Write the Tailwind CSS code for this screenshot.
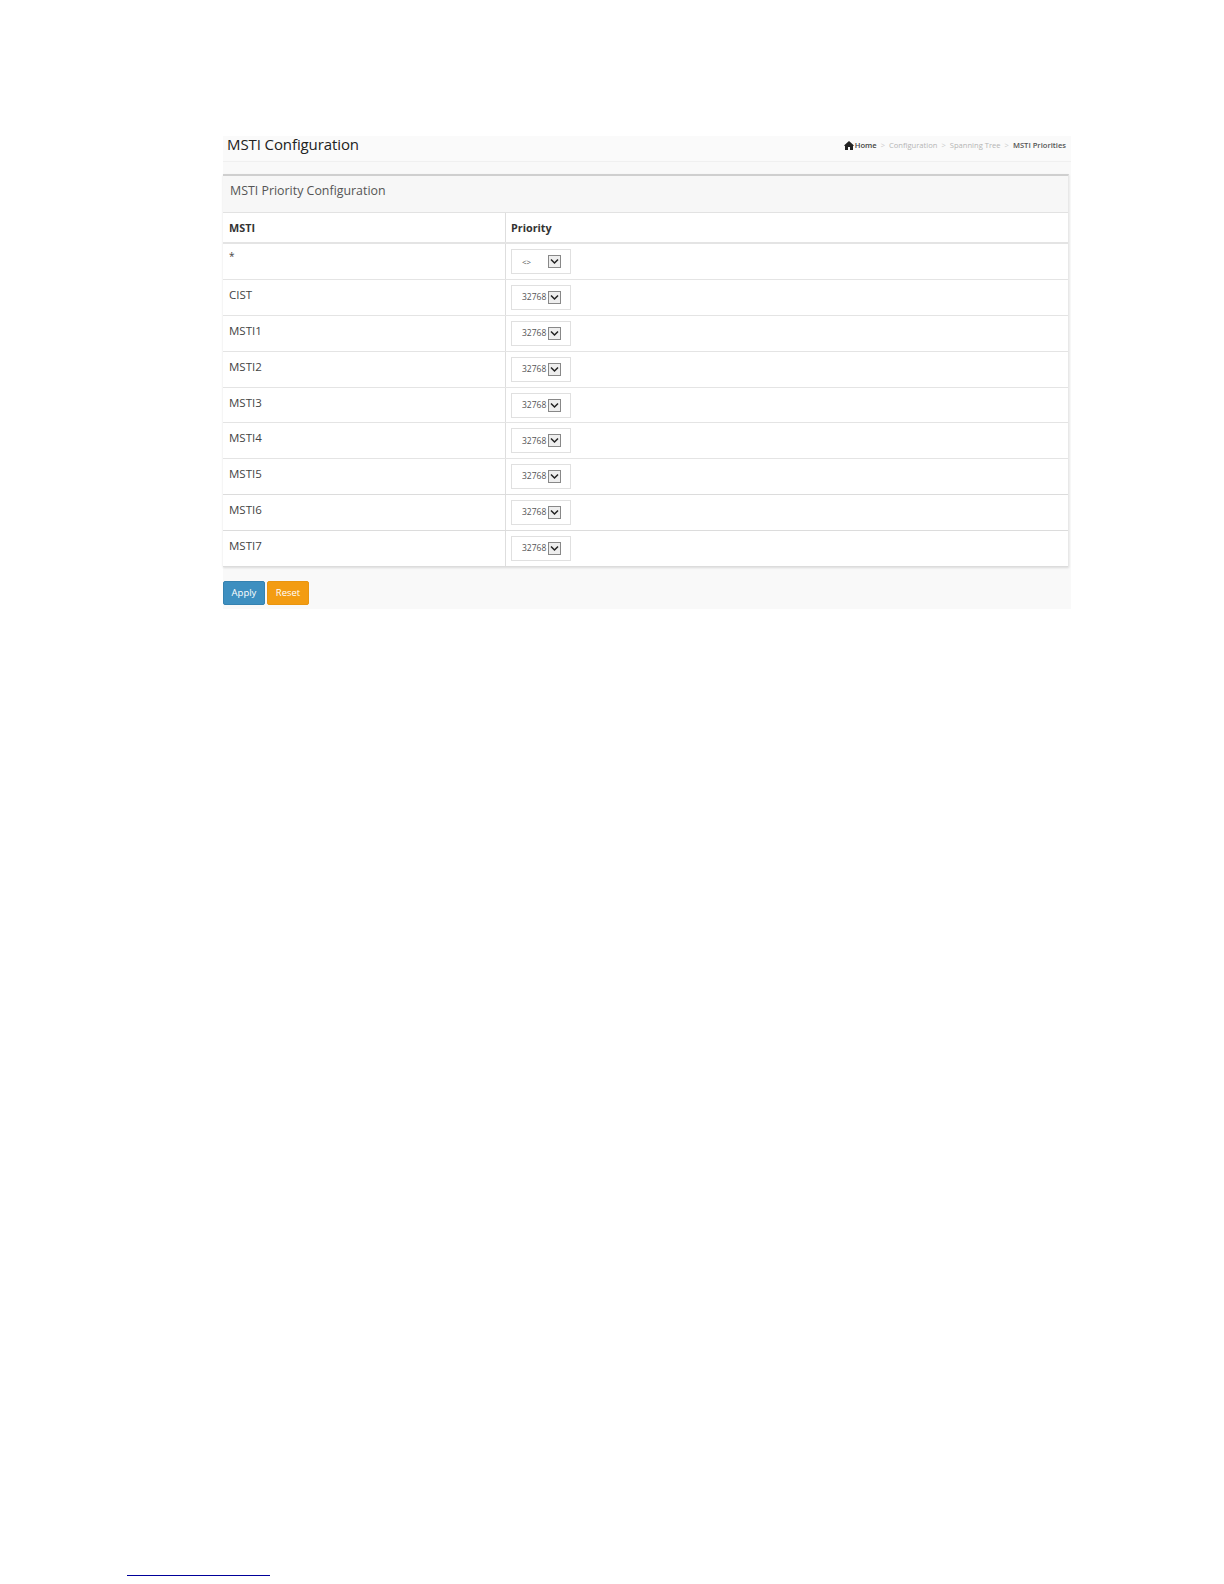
<!DOCTYPE html>
<html>
<head>
<meta charset="utf-8">
<script src="https://cdn.jsdelivr.net/npm/@tailwindcss/browser@4"></script>
</head>
<body class="bg-white font-['Open_Sans',sans-serif]">
<div class="w-[1224px] h-[1584px] flex flex-col">
  <div class="ml-[223px] mt-[136px] w-[848px] h-[473px] bg-[#f9f9f9] flex flex-col">
    <div class="h-[26px] flex justify-between border-b border-[#f0f0f0] pl-[4px] pr-[5px] bg-[#fafafa]">
      <div class="text-[15px] tracking-[-0.1px] leading-[16px] text-[#222] font-normal">MSTI Configuration</div>
      <div class="flex items-center gap-[4px] text-[7.6px] text-[#b5b5b5] h-[19px]">
        <span class="flex items-center gap-[1px] text-[#444] font-semibold">
          <svg width="10" height="9" viewBox="0 0 10 9"><path d="M0 4.5 5 0l5 4.500-1 .5v4H6V6H4v3H1V5z" fill="#222"/></svg>Home</span>
        <span class="text-[#ccc]">&gt;</span><span>Configuration</span>
        <span class="text-[#ccc]">&gt;</span><span>Spanning Tree</span>
        <span class="text-[#ccc]">&gt;</span><span class="text-[#555] font-semibold">MSTI Priorities</span>
      </div>
    </div>
    <div class="mt-[12px] mr-[2px] border-t-2 border-[#cfcfcf] border-r border-r-[#e8e8e8] shadow-[0_1px_2px_rgba(0,0,0,0.12)]">
      <div class="h-[37px] bg-[#f7f7f7] border-b border-[#e2e2e2] pl-[7px] pt-[6px] text-[12.4px] leading-[18px] text-[#555]">MSTI Priority Configuration</div>
      <div class="bg-white">
        <div class="flex h-[31px] border-b-2 border-[#e4e4e4] text-[10.8px] font-bold text-[#333]">
          <div class="w-[283px] border-r border-[#dedede] pl-[6px] pt-[7px] leading-[16px]">MSTI</div>
          <div class="flex-1 pl-[5px] pt-[7px] leading-[16px]">Priority</div>
        </div>
        <div class="flex h-[35.9px] border-b border-[#e4e4e4]"><div class="w-[283px] border-r border-[#dedede] pl-[6px] pt-[3px] text-[10px] leading-[18px] text-[#444]">*</div><div class="flex-1 pl-[5px] pt-[5px]"><div class="w-[60px] h-[25px] border border-[#e0e0e0] pl-[10px] pr-[9px] flex items-center justify-between text-[8px] text-[#555]"><span>&lt;&gt;</span><span class="w-[13px] h-[13px] border border-[#888] bg-[#eee] flex items-center justify-center"><svg width="9" height="7" viewBox="0 0 9 7"><path d="M1 1.500 4.500 5 8 1.500" fill="none" stroke="#222" stroke-width="1.500"/></svg></span></div></div></div>
        <div class="flex h-[35.9px] border-b border-[#e4e4e4]"><div class="w-[283px] border-r border-[#dedede] pl-[6px] pt-[6px] text-[11.5px] leading-[18px] text-[#444]">CIST</div><div class="flex-1 pl-[5px] pt-[5px]"><div class="w-[60px] h-[25px] border border-[#e0e0e0] pl-[10px] pr-[9px] flex items-center justify-between text-[8.500px] text-[#555]"><span>32768</span><span class="w-[13px] h-[13px] border border-[#888] bg-[#eee] flex items-center justify-center"><svg width="9" height="7" viewBox="0 0 9 7"><path d="M1 1.500 4.500 5 8 1.500" fill="none" stroke="#222" stroke-width="1.500"/></svg></span></div></div></div>
        <div class="flex h-[35.9px] border-b border-[#e4e4e4]"><div class="w-[283px] border-r border-[#dedede] pl-[6px] pt-[6px] text-[11.5px] leading-[18px] text-[#444]">MSTI1</div><div class="flex-1 pl-[5px] pt-[5px]"><div class="w-[60px] h-[25px] border border-[#e0e0e0] pl-[10px] pr-[9px] flex items-center justify-between text-[8.500px] text-[#555]"><span>32768</span><span class="w-[13px] h-[13px] border border-[#888] bg-[#eee] flex items-center justify-center"><svg width="9" height="7" viewBox="0 0 9 7"><path d="M1 1.500 4.500 5 8 1.500" fill="none" stroke="#222" stroke-width="1.500"/></svg></span></div></div></div>
        <div class="flex h-[35.9px] border-b border-[#e4e4e4]"><div class="w-[283px] border-r border-[#dedede] pl-[6px] pt-[6px] text-[11.5px] leading-[18px] text-[#444]">MSTI2</div><div class="flex-1 pl-[5px] pt-[5px]"><div class="w-[60px] h-[25px] border border-[#e0e0e0] pl-[10px] pr-[9px] flex items-center justify-between text-[8.500px] text-[#555]"><span>32768</span><span class="w-[13px] h-[13px] border border-[#888] bg-[#eee] flex items-center justify-center"><svg width="9" height="7" viewBox="0 0 9 7"><path d="M1 1.500 4.500 5 8 1.500" fill="none" stroke="#222" stroke-width="1.500"/></svg></span></div></div></div>
        <div class="flex h-[35.9px] border-b border-[#e4e4e4]"><div class="w-[283px] border-r border-[#dedede] pl-[6px] pt-[6px] text-[11.5px] leading-[18px] text-[#444]">MSTI3</div><div class="flex-1 pl-[5px] pt-[5px]"><div class="w-[60px] h-[25px] border border-[#e0e0e0] pl-[10px] pr-[9px] flex items-center justify-between text-[8.500px] text-[#555]"><span>32768</span><span class="w-[13px] h-[13px] border border-[#888] bg-[#eee] flex items-center justify-center"><svg width="9" height="7" viewBox="0 0 9 7"><path d="M1 1.500 4.500 5 8 1.500" fill="none" stroke="#222" stroke-width="1.500"/></svg></span></div></div></div>
        <div class="flex h-[35.9px] border-b border-[#e4e4e4]"><div class="w-[283px] border-r border-[#dedede] pl-[6px] pt-[6px] text-[11.5px] leading-[18px] text-[#444]">MSTI4</div><div class="flex-1 pl-[5px] pt-[5px]"><div class="w-[60px] h-[25px] border border-[#e0e0e0] pl-[10px] pr-[9px] flex items-center justify-between text-[8.500px] text-[#555]"><span>32768</span><span class="w-[13px] h-[13px] border border-[#888] bg-[#eee] flex items-center justify-center"><svg width="9" height="7" viewBox="0 0 9 7"><path d="M1 1.500 4.500 5 8 1.500" fill="none" stroke="#222" stroke-width="1.500"/></svg></span></div></div></div>
        <div class="flex h-[35.9px] border-b border-[#dcdcdc]"><div class="w-[283px] border-r border-[#dedede] pl-[6px] pt-[6px] text-[11.5px] leading-[18px] text-[#444]">MSTI5</div><div class="flex-1 pl-[5px] pt-[5px]"><div class="w-[60px] h-[25px] border border-[#e0e0e0] pl-[10px] pr-[9px] flex items-center justify-between text-[8.500px] text-[#555]"><span>32768</span><span class="w-[13px] h-[13px] border border-[#888] bg-[#eee] flex items-center justify-center"><svg width="9" height="7" viewBox="0 0 9 7"><path d="M1 1.500 4.500 5 8 1.500" fill="none" stroke="#222" stroke-width="1.500"/></svg></span></div></div></div>
        <div class="flex h-[35.9px] border-b border-[#dcdcdc]"><div class="w-[283px] border-r border-[#dedede] pl-[6px] pt-[6px] text-[11.5px] leading-[18px] text-[#444]">MSTI6</div><div class="flex-1 pl-[5px] pt-[5px]"><div class="w-[60px] h-[25px] border border-[#e0e0e0] pl-[10px] pr-[9px] flex items-center justify-between text-[8.500px] text-[#555]"><span>32768</span><span class="w-[13px] h-[13px] border border-[#888] bg-[#eee] flex items-center justify-center"><svg width="9" height="7" viewBox="0 0 9 7"><path d="M1 1.500 4.500 5 8 1.500" fill="none" stroke="#222" stroke-width="1.500"/></svg></span></div></div></div>
        <div class="flex h-[35.9px] border-b border-[#dcdcdc]"><div class="w-[283px] border-r border-[#dedede] pl-[6px] pt-[6px] text-[11.5px] leading-[18px] text-[#444]">MSTI7</div><div class="flex-1 pl-[5px] pt-[5px]"><div class="w-[60px] h-[25px] border border-[#e0e0e0] pl-[10px] pr-[9px] flex items-center justify-between text-[8.500px] text-[#555]"><span>32768</span><span class="w-[13px] h-[13px] border border-[#888] bg-[#eee] flex items-center justify-center"><svg width="9" height="7" viewBox="0 0 9 7"><path d="M1 1.500 4.500 5 8 1.500" fill="none" stroke="#222" stroke-width="1.500"/></svg></span></div></div></div>
      </div>
    </div>
    <div class="flex gap-[2px] mt-[14px] text-[9.500px] text-white">
      <div class="w-[42px] h-[24px] rounded-[2px] bg-[#3d8fc0] border border-[#3582b0] flex items-center justify-center">Apply</div>
      <div class="w-[42px] h-[24px] rounded-[2px] bg-[#f39c12] border border-[#e99510] flex items-center justify-center">Reset</div>
    </div>
  </div>
  <div class="ml-[127px] mt-[966px] w-[143px] h-[1px] bg-[#00009a]"></div>
</div>
</body>
</html>
